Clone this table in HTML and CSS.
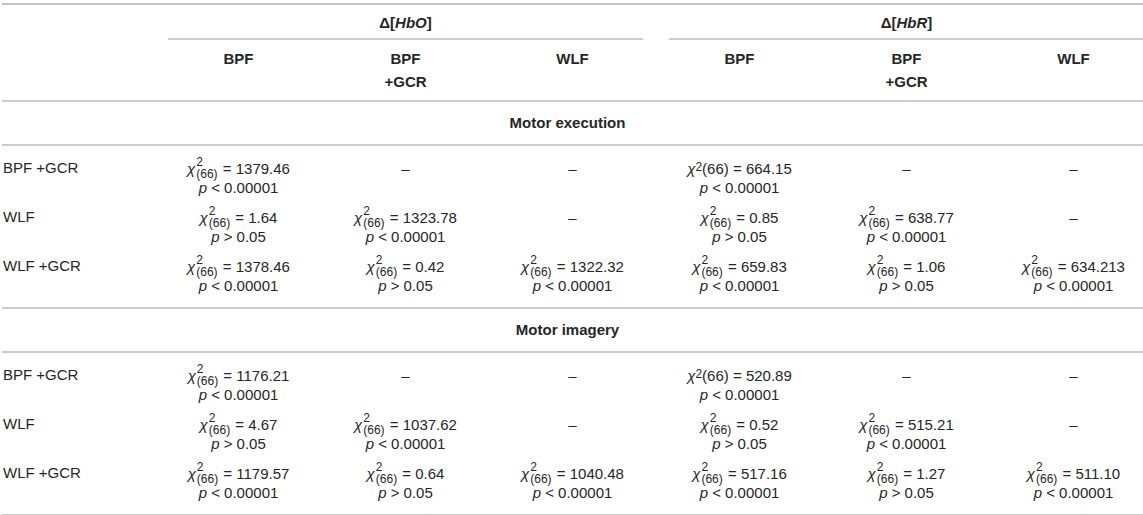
FILE: index.html
```html
<!DOCTYPE html>
<html lang="en">
<head>
  <meta charset="UTF-8" />
  <meta name="viewport" content="width=device-width, initial-scale=1.0" />
  <title>Chi-square comparison of filters</title>
  <link rel="stylesheet" href="styles.css">
</head>
<body>

<div class="table-wrap">
<table class="stats">
  <colgroup>
    <col class="label-col">
    <col><col><col><col><col><col>
  </colgroup>
  <thead>
    <tr class="top">
      <th></th>
      <th class="group" colspan="3"><div class="group-line">&Delta;[<i>HbO</i>]</div></th>
      <th class="group" colspan="3"><div class="group-line">&Delta;[<i>HbR</i>]</div></th>
    </tr>
    <tr class="sub">
      <th></th>
      <th>BPF</th>
      <th>BPF<br>+GCR</th>
      <th>WLF</th>
      <th>BPF</th>
      <th>BPF<br>+GCR</th>
      <th>WLF</th>
    </tr>
  </thead>

  <!-- Motor execution -->
  <tbody>
    <tr class="section"><td colspan="7">Motor execution</td></tr>
    <tr class="first">
      <td class="label">BPF +GCR</td>
      <td><div class="chi"><i>&chi;</i><span class="ss"><span>2</span><span>(66)</span></span> = 1379.46</div><div class="p"><i>p</i> &lt; 0.00001</div></td>
      <td><div class="chi">&ndash;</div></td>
      <td><div class="chi">&ndash;</div></td>
      <td><div class="chi"><i>&chi;</i><sup>2</sup>(66) = 664.15</div><div class="p"><i>p</i> &lt; 0.00001</div></td>
      <td><div class="chi">&ndash;</div></td>
      <td><div class="chi">&ndash;</div></td>
    </tr>
    <tr>
      <td class="label">WLF</td>
      <td><div class="chi"><i>&chi;</i><span class="ss"><span>2</span><span>(66)</span></span> = 1.64</div><div class="p"><i>p</i> &gt; 0.05</div></td>
      <td><div class="chi"><i>&chi;</i><span class="ss"><span>2</span><span>(66)</span></span> = 1323.78</div><div class="p"><i>p</i> &lt; 0.00001</div></td>
      <td><div class="chi">&ndash;</div></td>
      <td><div class="chi"><i>&chi;</i><span class="ss"><span>2</span><span>(66)</span></span> = 0.85</div><div class="p"><i>p</i> &gt; 0.05</div></td>
      <td><div class="chi"><i>&chi;</i><span class="ss"><span>2</span><span>(66)</span></span> = 638.77</div><div class="p"><i>p</i> &lt; 0.00001</div></td>
      <td><div class="chi">&ndash;</div></td>
    </tr>
    <tr class="last">
      <td class="label">WLF +GCR</td>
      <td><div class="chi"><i>&chi;</i><span class="ss"><span>2</span><span>(66)</span></span> = 1378.46</div><div class="p"><i>p</i> &lt; 0.00001</div></td>
      <td><div class="chi"><i>&chi;</i><span class="ss"><span>2</span><span>(66)</span></span> = 0.42</div><div class="p"><i>p</i> &gt; 0.05</div></td>
      <td><div class="chi"><i>&chi;</i><span class="ss"><span>2</span><span>(66)</span></span> = 1322.32</div><div class="p"><i>p</i> &lt; 0.00001</div></td>
      <td><div class="chi"><i>&chi;</i><span class="ss"><span>2</span><span>(66)</span></span> = 659.83</div><div class="p"><i>p</i> &lt; 0.00001</div></td>
      <td><div class="chi"><i>&chi;</i><span class="ss"><span>2</span><span>(66)</span></span> = 1.06</div><div class="p"><i>p</i> &gt; 0.05</div></td>
      <td><div class="chi"><i>&chi;</i><span class="ss"><span>2</span><span>(66)</span></span> = 634.213</div><div class="p"><i>p</i> &lt; 0.00001</div></td>
    </tr>
  </tbody>

  <!-- Motor imagery -->
  <tbody>
    <tr class="section"><td colspan="7">Motor imagery</td></tr>
    <tr class="first">
      <td class="label">BPF +GCR</td>
      <td><div class="chi"><i>&chi;</i><span class="ss"><span>2</span><span>(66)</span></span> = 1176.21</div><div class="p"><i>p</i> &lt; 0.00001</div></td>
      <td><div class="chi">&ndash;</div></td>
      <td><div class="chi">&ndash;</div></td>
      <td><div class="chi"><i>&chi;</i><sup>2</sup>(66) = 520.89</div><div class="p"><i>p</i> &lt; 0.00001</div></td>
      <td><div class="chi">&ndash;</div></td>
      <td><div class="chi">&ndash;</div></td>
    </tr>
    <tr>
      <td class="label">WLF</td>
      <td><div class="chi"><i>&chi;</i><span class="ss"><span>2</span><span>(66)</span></span> = 4.67</div><div class="p"><i>p</i> &gt; 0.05</div></td>
      <td><div class="chi"><i>&chi;</i><span class="ss"><span>2</span><span>(66)</span></span> = 1037.62</div><div class="p"><i>p</i> &lt; 0.00001</div></td>
      <td><div class="chi">&ndash;</div></td>
      <td><div class="chi"><i>&chi;</i><span class="ss"><span>2</span><span>(66)</span></span> = 0.52</div><div class="p"><i>p</i> &gt; 0.05</div></td>
      <td><div class="chi"><i>&chi;</i><span class="ss"><span>2</span><span>(66)</span></span> = 515.21</div><div class="p"><i>p</i> &lt; 0.00001</div></td>
      <td><div class="chi">&ndash;</div></td>
    </tr>
    <tr class="last">
      <td class="label">WLF +GCR</td>
      <td><div class="chi"><i>&chi;</i><span class="ss"><span>2</span><span>(66)</span></span> = 1179.57</div><div class="p"><i>p</i> &lt; 0.00001</div></td>
      <td><div class="chi"><i>&chi;</i><span class="ss"><span>2</span><span>(66)</span></span> = 0.64</div><div class="p"><i>p</i> &gt; 0.05</div></td>
      <td><div class="chi"><i>&chi;</i><span class="ss"><span>2</span><span>(66)</span></span> = 1040.48</div><div class="p"><i>p</i> &lt; 0.00001</div></td>
      <td><div class="chi"><i>&chi;</i><span class="ss"><span>2</span><span>(66)</span></span> = 517.16</div><div class="p"><i>p</i> &lt; 0.00001</div></td>
      <td><div class="chi"><i>&chi;</i><span class="ss"><span>2</span><span>(66)</span></span> = 1.27</div><div class="p"><i>p</i> &gt; 0.05</div></td>
      <td><div class="chi"><i>&chi;</i><span class="ss"><span>2</span><span>(66)</span></span> = 511.10</div><div class="p"><i>p</i> &lt; 0.00001</div></td>
    </tr>
  </tbody>
</table>
</div>

</body>
</html>
```

FILE: styles.css
```css
html, body {
  overflow: hidden;
}

body {
  margin: 0 0 0 2px;
  padding-top: 3px;
  background: #ffffff;
  color: #262626;
  font-family: "Liberation Sans", Arial, sans-serif;
  font-size: 15px;
}

.table-wrap {
  width: 1155px;
  border-top: 2px solid #c4c4c4;
}

.stats {
  width: 100%;
  table-layout: fixed;
  border-collapse: collapse;
}

.label-col {
  width: 153px;
}

/* header */

th {
  font-weight: bold;
  text-align: center;
  vertical-align: top;
  line-height: 23px;
}

.top th {
  padding: 6px 0 0;
}

.group-line {
  margin: 0 13px;
  padding-bottom: 4px;
  border-bottom: 2px solid #cccccc;
}

.group-line i {
  font-weight: bold;
}

.sub th {
  padding: 7px 0;
  border-bottom: 2px solid #cccccc;
}

/* body */

td {
  padding: 5px 0;
  text-align: center;
  vertical-align: top;
}

.section td {
  padding: 10px 24px 10px 0;
  line-height: 22px;
  font-weight: bold;
  border-bottom: 2px solid #cccccc;
}

.first td {
  padding-top: 11px;
}

.last td {
  padding-bottom: 13px;
  border-bottom: 2px solid #cccccc;
}

td.label {
  text-align: left;
  padding-left: 1px;
  line-height: 22px;
}

.chi {
  height: 22px;
  display: flex;
  align-items: center;
  justify-content: center;
  white-space: pre;
}

.chi sup {
  font-size: 12px;
  line-height: 0;
  position: relative;
  top: -1px;
}

.ss {
  display: inline-flex;
  flex-direction: column;
  align-items: flex-start;
  font-size: 12px;
  line-height: 12px;
  margin: 0 1px;
}

.p {
  line-height: 17px;
  white-space: nowrap;
}
```
